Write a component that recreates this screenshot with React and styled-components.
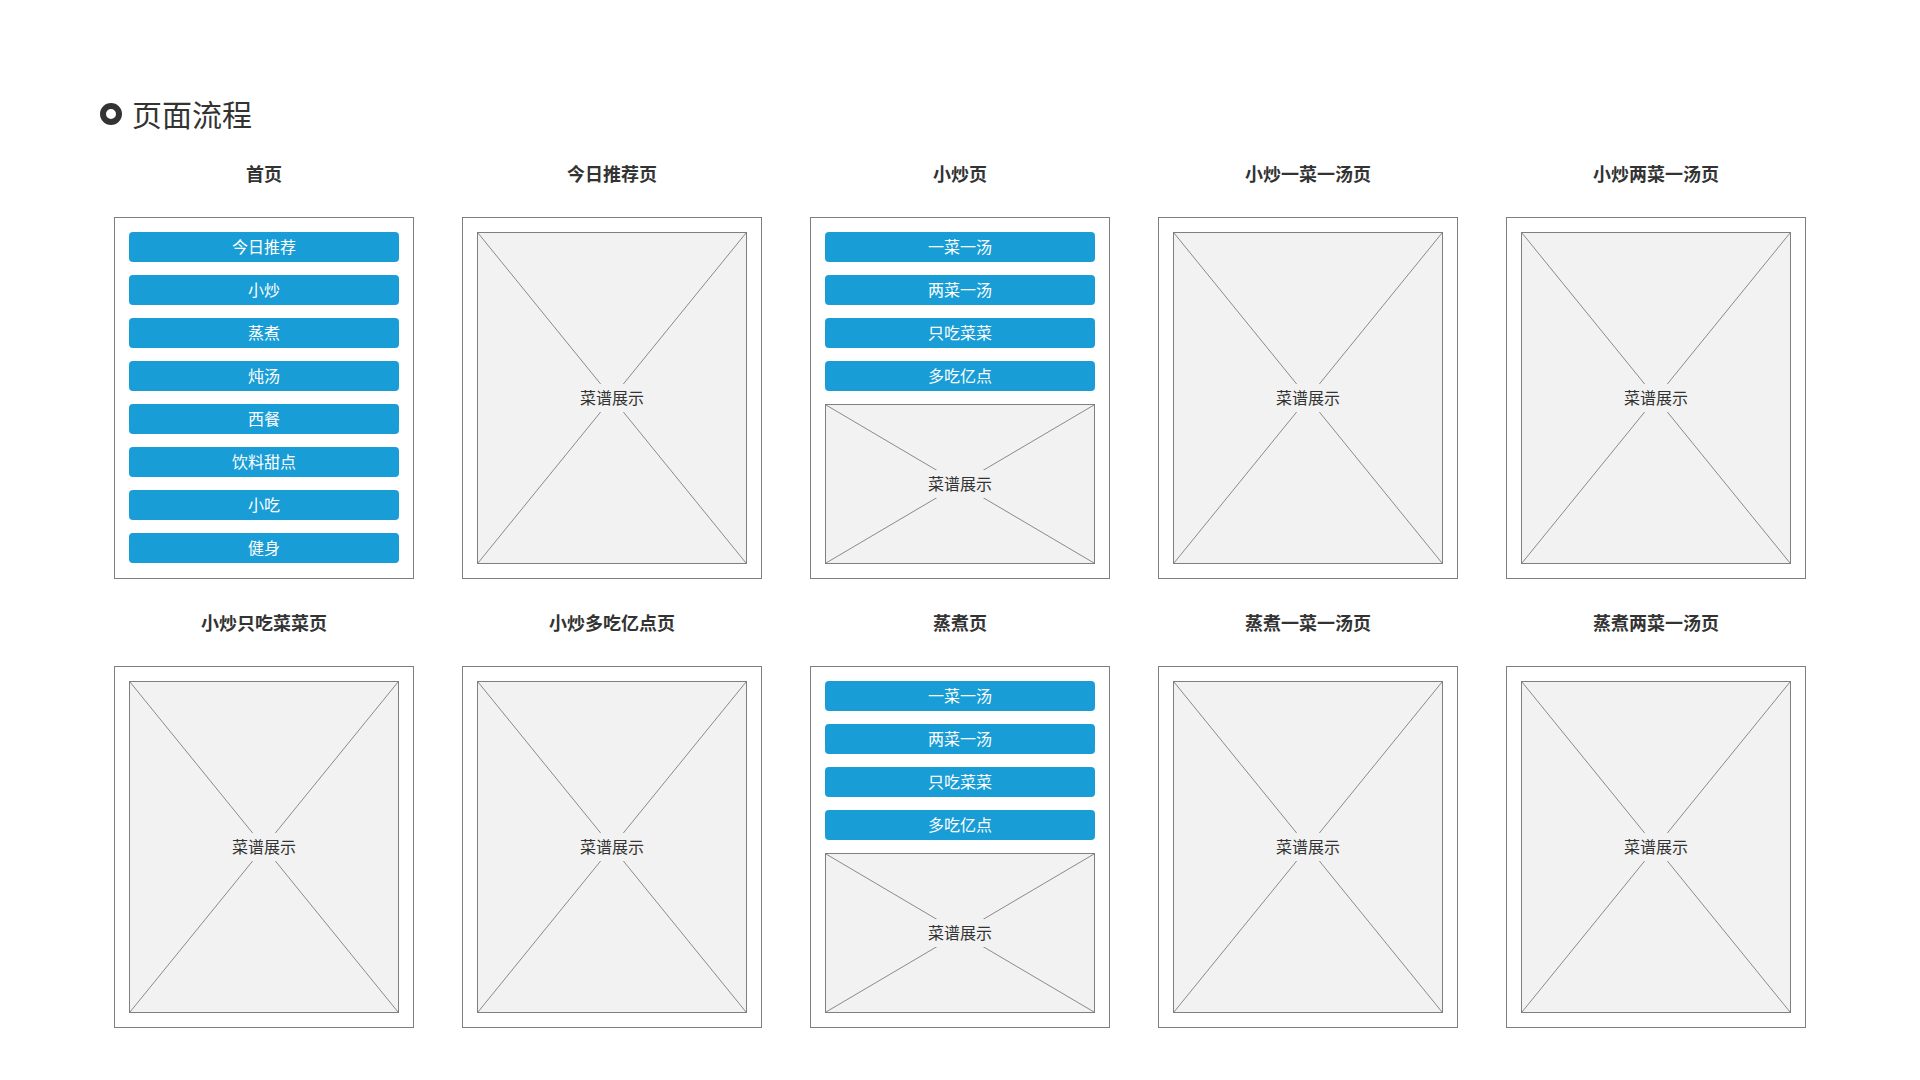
import React from 'react';
import styled, { createGlobalStyle } from 'styled-components';

const GlobalStyle = createGlobalStyle`
  body {
    margin: 0;
    background: #fff;
    font-family: "Noto Sans CJK SC", "Noto Sans", sans-serif;
    color: #333;
  }
`;

const Page = styled.div`
  width: 1920px;
  height: 1080px;
  box-sizing: border-box;
  padding-top: 98px;
  overflow: hidden;
`;

const Header = styled.div`
  display: flex;
  align-items: center;
  gap: 10px;
  margin-left: 100px;
  height: 30px;
`;

const Ring = styled.span`
  width: 22px;
  height: 22px;
  margin-top: 2px;
  box-sizing: border-box;
  border: 6px solid #333;
  border-radius: 50%;
`;

const Title = styled.h1`
  margin: 0;
  font-size: 30px;
  line-height: 30px;
  font-weight: normal;
  color: #333;
`;

const Grid = styled.div`
  display: grid;
  grid-template-columns: repeat(5, 300px);
  column-gap: 48px;
  row-gap: 32px;
  margin: 34px 0 0 114px;
`;

const Column = styled.div`
  display: flex;
  flex-direction: column;
`;

const Label = styled.div`
  height: 24px;
  line-height: 22px;
  margin-bottom: 31px;
  text-align: center;
  font-size: 18px;
  font-weight: bold;
  color: #333;
`;

const Frame = styled.div`
  height: 362px;
  box-sizing: border-box;
  border: 1px solid #7f7f7f;
  padding: 14px;
  display: flex;
  flex-direction: column;
  gap: 13px;
`;

const NavButton = styled.div`
  height: 30px;
  flex-shrink: 0;
  border-radius: 4px;
  background: #199dd6;
  color: #fff;
  font-size: 16px;
  line-height: 28px;
  text-align: center;
`;

const Placeholder = styled.div`
  position: relative;
  flex: 1;
  box-sizing: border-box;
  border: 1px solid #7f7f7f;
  background: #f2f2f2;
  display: flex;
  align-items: center;
  justify-content: center;
`;

const Cross = styled.svg`
  position: absolute;
  inset: 0;
  width: 100%;
  height: 100%;
`;

const PlaceholderText = styled.span`
  position: relative;
  background: #f2f2f2;
  padding: 3px 6px 5px;
  font-size: 16px;
  line-height: 20px;
  color: #333;
`;

const ImageBox = () => (
  <Placeholder>
    <Cross preserveAspectRatio="none" viewBox="0 0 100 100">
      <line x1="0" y1="0" x2="100" y2="100" stroke="#8a8a8a" strokeWidth="1" vectorEffect="non-scaling-stroke" />
      <line x1="100" y1="0" x2="0" y2="100" stroke="#8a8a8a" strokeWidth="1" vectorEffect="non-scaling-stroke" />
    </Cross>
    <PlaceholderText>菜谱展示</PlaceholderText>
  </Placeholder>
);

const homeButtons = ['今日推荐', '小炒', '蒸煮', '炖汤', '西餐', '饮料甜点', '小吃', '健身'];
const subButtons = ['一菜一汤', '两菜一汤', '只吃菜菜', '多吃亿点'];

const pages = [
  { title: '首页', buttons: homeButtons, image: false },
  { title: '今日推荐页', buttons: [], image: true },
  { title: '小炒页', buttons: subButtons, image: true },
  { title: '小炒一菜一汤页', buttons: [], image: true },
  { title: '小炒两菜一汤页', buttons: [], image: true },
  { title: '小炒只吃菜菜页', buttons: [], image: true },
  { title: '小炒多吃亿点页', buttons: [], image: true },
  { title: '蒸煮页', buttons: subButtons, image: true },
  { title: '蒸煮一菜一汤页', buttons: [], image: true },
  { title: '蒸煮两菜一汤页', buttons: [], image: true },
];

const App = () => (
  <Page>
    <GlobalStyle />
    <Header>
      <Ring />
      <Title>页面流程</Title>
    </Header>
    <Grid>
      {pages.map((page) => (
        <Column key={page.title}>
          <Label>{page.title}</Label>
          <Frame>
            {page.buttons.map((b) => (
              <NavButton key={b}>{b}</NavButton>
            ))}
            {page.image && <ImageBox />}
          </Frame>
        </Column>
      ))}
    </Grid>
  </Page>
);

export default App;
